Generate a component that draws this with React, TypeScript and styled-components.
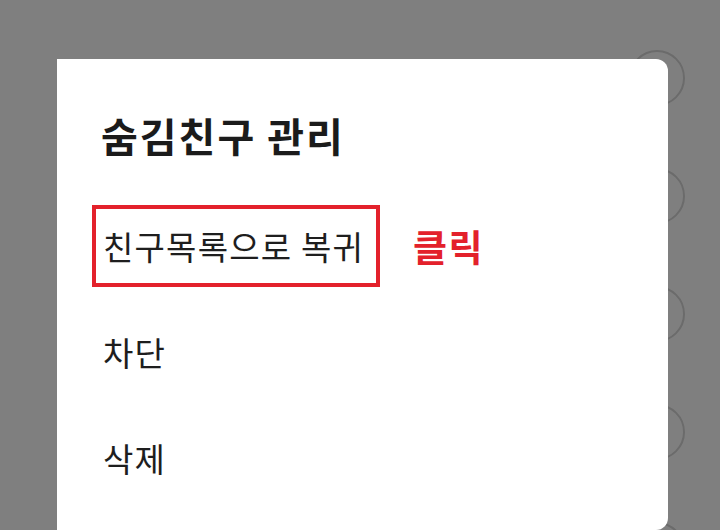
import styled, { createGlobalStyle } from "styled-components";

const GlobalStyle = createGlobalStyle`
  html, body {
    margin: 0;
    padding: 0;
    background: #ffffff;
  }
  body {
    font-family: "Noto Sans CJK KR", "Noto Sans", sans-serif;
  }
`;

const Screen = styled.div`
  position: relative;
  width: 720px;
  height: 530px;
  overflow: hidden;
  background: #ffffff;
`;

const FriendList = styled.ul`
  list-style: none;
  margin: 0;
  padding: 19px 0 0;
`;

const FriendRow = styled.li`
  display: flex;
  justify-content: flex-end;
  align-items: center;
  height: 118px;
  padding-right: 35px;
`;

const RadioCircle = styled.span`
  width: 52px;
  height: 52px;
  border-radius: 50%;
  border: 2px solid #d6d6d6;
`;

const Dim = styled.div`
  position: absolute;
  inset: 0;
  background: rgba(0, 0, 0, 0.5);
  padding: 59px 0 0 57px;
`;

const Dialog = styled.section`
  width: 611px;
  height: 471px;
  background: #ffffff;
  border-radius: 0 12px 12px 0;
  padding-top: 48px;
  box-sizing: border-box;
`;

const Title = styled.h2`
  margin: 0 0 30px;
  padding-left: 44px;
  font-size: 40px;
  line-height: 56px;
  font-weight: 700;
  color: #1b1b1b;
  letter-spacing: 2px;
`;

const Menu = styled.ul`
  list-style: none;
  margin: 0;
  padding: 0;
`;

const MenuRow = styled.li`
  display: flex;
  align-items: center;
  height: 106px;
  gap: 33px;
`;

const MenuButton = styled.button<{ $highlight?: boolean }>`
  display: flex;
  align-items: center;
  height: 82px;
  margin-left: 35px;
  padding: 0 12px 0 7px;
  border: 4px solid ${(p) => (p.$highlight ? "#e3212b" : "transparent")};
  background: none;
  font-family: inherit;
  font-size: 33px;
  font-weight: 400;
  letter-spacing: 1.2px;
  color: #1e1e1e;
  cursor: pointer;
`;

const ClickLabel = styled.span`
  font-size: 37px;
  font-weight: 700;
  letter-spacing: 1.5px;
  color: #e3212b;
`;

const friends = [0, 1, 2, 3, 4];

const actions = [
  { label: "친구목록으로 복귀", highlight: true },
  { label: "차단" },
  { label: "삭제" },
];

function App() {
  return (
    <>
      <GlobalStyle />
      <Screen>
        <FriendList>
          {friends.map((f) => (
            <FriendRow key={f}>
              <RadioCircle />
            </FriendRow>
          ))}
        </FriendList>
        <Dim>
          <Dialog>
            <Title>숨김친구 관리</Title>
            <Menu>
              {actions.map((a) => (
                <MenuRow key={a.label}>
                  <MenuButton $highlight={a.highlight}>{a.label}</MenuButton>
                  {a.highlight && <ClickLabel>클릭</ClickLabel>}
                </MenuRow>
              ))}
            </Menu>
          </Dialog>
        </Dim>
      </Screen>
    </>
  );
}

export default App;
